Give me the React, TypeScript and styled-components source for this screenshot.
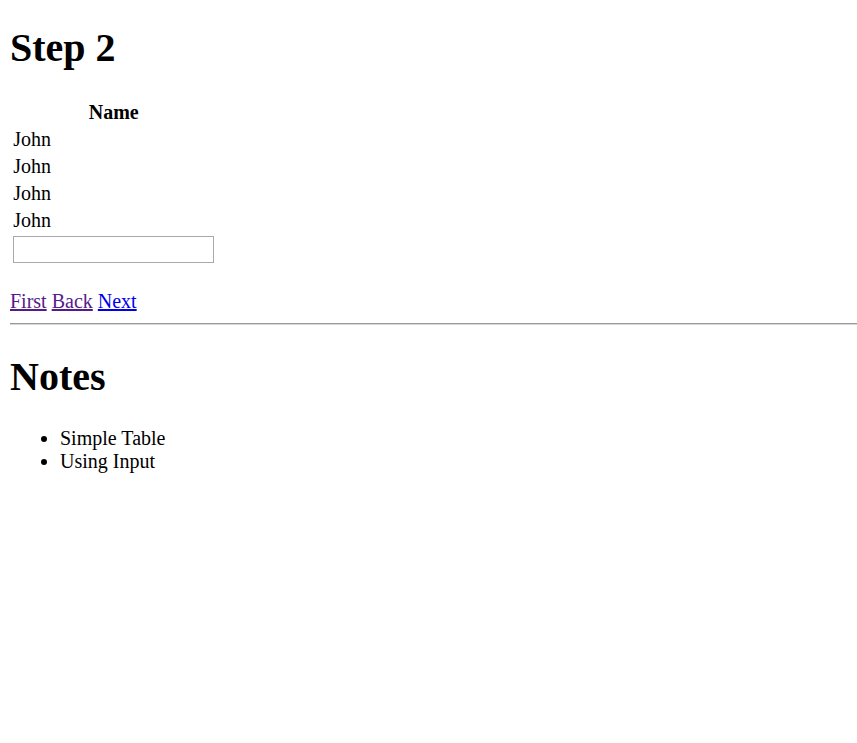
import styled, { createGlobalStyle } from "styled-components";

const GlobalStyle = createGlobalStyle`
  html, body {
    background: #fff;
  }
  body {
    margin: 10px 0 10px 10px;
    font-family: "Liberation Serif", "Times New Roman", serif;
    font-size: 20px;
    color: #000;
  }
`;

const Heading = styled.h1<{ $first?: boolean }>`
  font-size: 40px;
  font-weight: bold;
  margin: ${({ $first }) => ($first ? "14px 0 26.8px" : "27.5px 0")};
`;

const NameTable = styled.table`
  border-spacing: 2.5px;
  border-collapse: separate;
  font-size: 20px;
  line-height: 22.5px;
`;

const HeadCell = styled.th`
  padding: 1.25px;
  font-weight: bold;
  text-align: center;
`;

const Cell = styled.td`
  padding: 1.25px;
  text-align: left;
`;

const NameInput = styled.input`
  box-sizing: border-box;
  display: block;
  width: 201px;
  height: 27px;
  margin: 0;
  padding: 1px 2px;
  border: 1px solid #a9a9a9;
  border-radius: 0;
  font-family: "Liberation Sans", Arial, sans-serif;
  font-size: 16.67px;
  background: #fff;
`;

const Pager = styled.p`
  margin: 24px 0 0;
  line-height: 23px;
`;

const PageLink = styled.a<{ $visited?: boolean }>`
  color: ${({ $visited }) => ($visited ? "#551a8b" : "#0000ee")};
  text-decoration: underline;
`;

const Rule = styled.hr`
  margin: 10px 0;
  border: 0;
  border-top: 1px solid #9a9a9a;
  border-bottom: 1px solid #d6d6d6;
  height: 0;
`;

const NoteList = styled.ul`
  margin: 20px 0;
  padding-left: 50px;
  list-style: disc;
  line-height: 23px;
`;

const names = ["John", "John", "John", "John"];

const App = () => (
  <>
    <GlobalStyle />
    <Heading $first>Step 2</Heading>
    <NameTable>
      <thead>
        <tr>
          <HeadCell>Name</HeadCell>
        </tr>
      </thead>
      <tbody>
        {names.map((name, i) => (
          <tr key={i}>
            <Cell>{name}</Cell>
          </tr>
        ))}
        <tr>
          <Cell>
            <NameInput type="text" />
          </Cell>
        </tr>
      </tbody>
    </NameTable>
    <Pager>
      <PageLink href="#first" $visited>
        First
      </PageLink>{" "}
      <PageLink href="#back" $visited>
        Back
      </PageLink>{" "}
      <PageLink href="#next">Next</PageLink>
    </Pager>
    <Rule />
    <Heading>Notes</Heading>
    <NoteList>
      <li>Simple Table</li>
      <li>Using Input</li>
    </NoteList>
  </>
);

export default App;
